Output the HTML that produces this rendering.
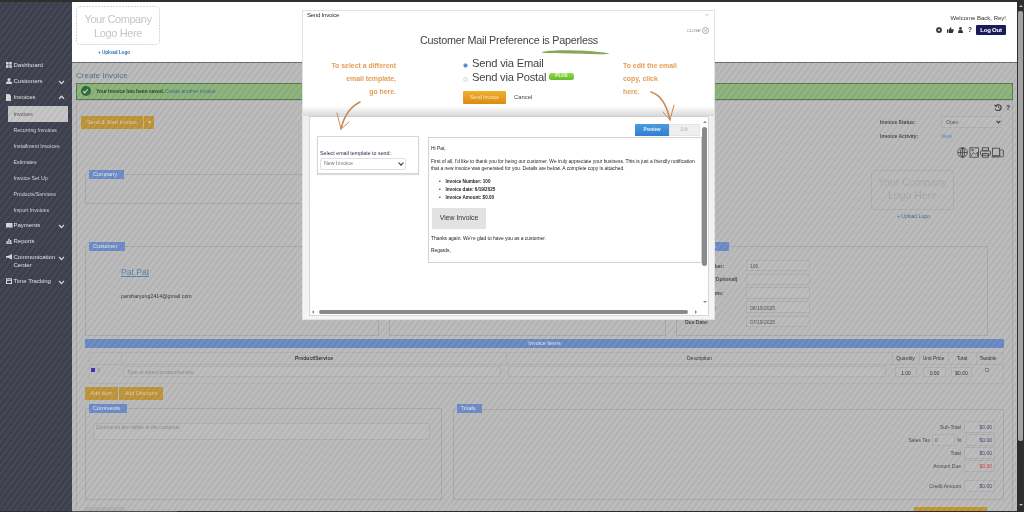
<!DOCTYPE html>
<html><head><meta charset="utf-8">
<style>
*{margin:0;padding:0;box-sizing:border-box}
html,body{width:1024px;height:512px;overflow:hidden;background:#c2c2c2;font-family:"Liberation Sans",sans-serif;-webkit-font-smoothing:antialiased}
.a{position:absolute}
.t{position:absolute;white-space:nowrap;line-height:1}
.stripes{background-image:repeating-linear-gradient(127deg,rgba(0,0,0,0.05) 0,rgba(255,255,255,0.05) 2.4px,rgba(0,0,0,0.05) 4.8px)}
#side{left:0;top:0;width:72px;height:512px;background-color:#3d3f4e}
#side .m{color:#e4e4e4;font-size:6px}
#side .s{color:#d8d8d8;font-size:5.25px}
#hdr{left:72px;top:2px;width:945px;height:60px;background:#fff}
#content{left:72px;top:62px;width:945px;height:450px;background-color:#bbbbbb;border-top:1px solid #6a6a6a}
.fs{position:absolute;border:1px solid #a9a9a9}
.lg{position:absolute;background:#6c8bc8;color:#e4e9f4;font-size:5.6px;line-height:9px;padding-left:4px}
.inp{position:absolute;border:1px solid #b0b0b0;background:rgba(255,255,255,0.04);font-size:5px;color:#555;line-height:1}
.btn-o{position:absolute;background:#bf9538;color:#dccfae;font-size:5.5px;text-align:center}
.lbl{position:absolute;font-size:5px;color:#4a4a4a;white-space:nowrap;line-height:1}
#modal{left:301.5px;top:9.5px;width:413px;height:310px;background:#fff;border:1px solid #e2e2e2}
.hand{position:absolute;color:#e69c55;font-family:"Liberation Sans",sans-serif;font-weight:bold;font-size:6.9px;white-space:nowrap;line-height:1}
.em{position:absolute;font-size:4.9px;color:#222;white-space:nowrap;line-height:1}
</style></head><body><div id="root" style="position:absolute;left:0;top:0;width:1024px;height:512px;will-change:transform">

<!-- top strip -->


<!-- sidebar -->
<div id="side" class="a">
  <svg class="a" style="left:6px;top:62px" width="6" height="6" viewBox="0 0 6 6" fill="#d8d8d8"><rect x="0" y="0" width="2.6" height="2.6"/><rect x="3.2" y="0" width="2.6" height="2.6"/><rect x="0" y="3.2" width="2.6" height="2.6"/><rect x="3.2" y="3.2" width="2.6" height="2.6"/></svg>
  <div class="t m" style="left:13.5px;top:62px">Dashboard</div>
  <svg class="a" style="left:6px;top:78px" width="6" height="6" viewBox="0 0 6 6" fill="#d8d8d8"><circle cx="3" cy="1.5" r="1.5"/><path d="M0 6 C0 3.5 1 3.2 3 3.2 C5 3.2 6 3.5 6 6 Z"/></svg>
  <div class="t m" style="left:13.5px;top:78px">Customers</div>
  <svg class="a" style="left:58px;top:79.5px" width="7" height="5" viewBox="0 0 7 5"><polyline points="1,1 3.5,3.6 6,1" stroke="#dadada" stroke-width="1.3" fill="none"/></svg>
  <svg class="a" style="left:6px;top:94px" width="5" height="7" viewBox="0 0 5 7" fill="#d8d8d8"><path d="M0 0 H3.2 L5 1.8 V7 H0 Z"/></svg>
  <div class="t m" style="left:13.5px;top:94px">Invoices</div>
  <svg class="a" style="left:58px;top:95px" width="7" height="5" viewBox="0 0 7 5"><polyline points="1,3.8 3.5,1.2 6,3.8" stroke="#dadada" stroke-width="1.3" fill="none"/></svg>
  <div class="a" style="left:8px;top:106px;width:60px;height:15.8px;background:#c6c6c6"></div>
  <div class="t s" style="left:13.5px;top:111.6px;color:#555">Invoices</div>
  <div class="t s" style="left:13.5px;top:127.6px">Recurring Invoices</div>
  <div class="t s" style="left:13.5px;top:143.6px">Installment Invoices</div>
  <div class="t s" style="left:13.5px;top:159.6px">Estimates</div>
  <div class="t s" style="left:13.5px;top:175.6px">Invoice Set Up</div>
  <div class="t s" style="left:13.5px;top:191.6px">Products/Services</div>
  <div class="t s" style="left:13.5px;top:207.6px">Import Invoices</div>
  <svg class="a" style="left:6px;top:223px" width="7" height="5" viewBox="0 0 7 5" fill="#d8d8d8"><rect x="0" y="0" width="6.5" height="4.5"/></svg>
  <div class="t m" style="left:13.5px;top:222px">Payments</div>
  <svg class="a" style="left:58px;top:223.5px" width="7" height="5" viewBox="0 0 7 5"><polyline points="1,1 3.5,3.6 6,1" stroke="#dadada" stroke-width="1.3" fill="none"/></svg>
  <svg class="a" style="left:6px;top:238px" width="6" height="6" viewBox="0 0 6 6" fill="#d8d8d8"><rect x="0.5" y="3" width="1.3" height="2.5"/><rect x="2.3" y="0.8" width="1.3" height="4.7"/><rect x="4.1" y="2" width="1.3" height="3.5"/><rect x="0" y="5.3" width="6" height="0.7"/></svg>
  <div class="t m" style="left:13.5px;top:238px">Reports</div>
  <svg class="a" style="left:6px;top:254px" width="7" height="6" viewBox="0 0 7 6" fill="#d8d8d8"><path d="M0 2 H2 L6 0 V5.5 L2 3.8 H0 Z"/></svg>
  <div class="t m" style="left:13.5px;top:254px">Communication</div>
  <div class="t m" style="left:13.5px;top:262px">Center</div>
  <svg class="a" style="left:58px;top:255.5px" width="7" height="5" viewBox="0 0 7 5"><polyline points="1,1 3.5,3.6 6,1" stroke="#dadada" stroke-width="1.3" fill="none"/></svg>
  <svg class="a" style="left:6px;top:278px" width="6" height="6" viewBox="0 0 6 6" fill="none" stroke="#d8d8d8" stroke-width="1"><rect x="0.5" y="0.8" width="5" height="4.7"/><line x1="0.5" y1="2.3" x2="5.5" y2="2.3"/></svg>
  <div class="t m" style="left:13.5px;top:278px">Time Tracking</div>
  <svg class="a" style="left:58px;top:279.5px" width="7" height="5" viewBox="0 0 7 5"><polyline points="1,1 3.5,3.6 6,1" stroke="#dadada" stroke-width="1.3" fill="none"/></svg>
</div>

<!-- content -->
<div id="content" class="a">
</div>
<div id="cc">
  <div class="t" style="left:76px;top:71.5px;font-size:8px;color:#5b6b8b">Create Invoice</div>
  <div class="a" style="left:76px;top:83px;width:937px;height:17px;background:#8cb37a;border:1px solid #4f7d4c"></div>
  <div class="a" style="left:81px;top:86px;width:10px;height:10px;border-radius:50%;background:#2c6b3b"></div>
  <div class="a" style="left:83.5px;top:88px;width:3px;height:5px;border-right:1.3px solid #d8e8d8;border-bottom:1.3px solid #d8e8d8;transform:rotate(40deg)"></div>
  <div class="t" style="left:96px;top:89px;font-size:5.2px;color:#234a23;font-weight:bold;letter-spacing:-0.15px">Your Invoice has been saved.</div>
  <div class="t" style="left:165px;top:89px;font-size:5px;color:#3f6b9c">Create another Invoice</div>
  <!-- outer panel -->
  <div class="fs" style="left:76px;top:100px;width:937px;height:410px;border-color:#adadad;border-bottom:none"></div>
  <!-- send & start button -->
  <div class="btn-o" style="left:81px;top:116px;width:62px;height:13px;line-height:13px">Send &amp; Start Invoice</div>
  <div class="btn-o" style="left:143px;top:116px;width:11px;height:13px;line-height:13px;border-left:1px solid #d7b26a">&#9662;</div>
  <!-- right top -->
  <svg class="a" style="left:994px;top:104px" width="8" height="7" viewBox="0 0 8 7" fill="none" stroke="#333" stroke-width="1.1"><path d="M1.6 2.2 A3 3 0 1 1 1.3 4.6"/><path d="M0.6 0.6 L1.6 2.4 L3.4 1.7" stroke-width="1"/><path d="M4.5 2 V3.7 L5.6 4.4" stroke-width="0.8"/></svg>
  <div class="t" style="left:1006px;top:104px;font-size:7px;color:#333;font-weight:bold">?</div>
  <div class="lbl" style="left:880px;top:119.5px;font-weight:bold;color:#474747">Invoice Status:</div>
  <div class="inp" style="left:941px;top:116px;width:61px;height:12px;padding:3px 0 0 4px">Open</div>
  <svg class="a" style="left:995.5px;top:120px" width="5" height="4" viewBox="0 0 5 4"><polyline points="0.6,0.8 2.5,2.9 4.4,0.8" stroke="#333" stroke-width="1.1" fill="none"/></svg>
  <div class="lbl" style="left:880px;top:134px;font-weight:bold;color:#474747">Invoice Activity:</div>
  <div class="t" style="left:941px;top:134px;font-size:5px;color:#5a86b8">View</div>
  <svg class="a" style="left:957px;top:147px" width="48" height="11" viewBox="0 0 48 11" fill="none" stroke="#4a4a4a" stroke-width="0.9">
    <circle cx="5.5" cy="5.5" r="4.8"/><ellipse cx="5.5" cy="5.5" rx="2" ry="4.8"/><line x1="0.7" y1="5.5" x2="10.3" y2="5.5"/><line x1="5.5" y1="0.7" x2="5.5" y2="10.3"/>
    <rect x="13" y="0.8" width="8.5" height="9.4"/><path d="M14 9 L16.5 5.5 L18.5 7.5 L20.5 5 V9.5" stroke-width="0.8"/><circle cx="15.5" cy="3" r="0.8"/>
    <rect x="25.5" y="0.8" width="6" height="3"/><rect x="23.5" y="3.8" width="10" height="4.5" rx="1"/><rect x="25.5" y="6.5" width="6" height="3.7"/>
    <rect x="35.5" y="1.2" width="7" height="7.5"/><rect x="42.8" y="3" width="3.6" height="6.8" rx="0.5"/><line x1="34.5" y1="9.8" x2="42.5" y2="9.8" stroke-width="1.2"/>
  </svg>
  <!-- logo box right -->
  <div class="a" style="left:871px;top:170px;width:83px;height:40px;border:1px solid #aeaeae;border-radius:3px"></div>
  <div class="t" style="left:871px;width:83px;text-align:center;top:177px;font-size:10.5px;color:#a9a9a9">Your Company</div>
  <div class="t" style="left:871px;width:83px;text-align:center;top:190px;font-size:10.5px;color:#a9a9a9">Logo Here</div>
  <div class="t" style="left:897px;top:214px;font-size:5px;color:#3f6a9c">+ Upload Logo</div>
  <!-- company fieldset -->
  <div class="fs" style="left:85px;top:174px;width:560px;height:30px"></div>
  <div class="lg" style="left:89px;top:170px;width:35px">Company</div>
  <!-- customer fieldset -->
  <div class="fs" style="left:85px;top:246px;width:294px;height:90px"></div>
  <div class="lg" style="left:89px;top:242px;width:36px">Customer</div>
  <div class="t" style="left:121px;top:267.5px;font-size:8.6px;color:#5a80b0;text-decoration:underline">Pat Pat</div>
  <div class="t" style="left:121px;top:294px;font-size:5.3px;color:#333">pambaryung2414@gmail.com</div>
  <!-- middle panel -->
  <div class="fs" style="left:389px;top:246px;width:277px;height:90px"></div>
  <!-- details fieldset -->
  <div class="fs" style="left:676px;top:246px;width:312px;height:90px"></div>
  <div class="lg" style="left:694px;top:242px;width:35px;padding-left:5px">Details</div>
  <div class="lbl" style="left:685px;top:263.5px;font-weight:bold;color:#474747">Invoice Number:</div>
  <div class="inp" style="left:746px;top:260px;width:64px;height:11px;padding:3px 0 0 3px">100</div>
  <div class="lbl" style="left:685px;top:277px;font-weight:bold;color:#474747">PO Number (Optional)</div>
  <div class="inp" style="left:746px;top:274px;width:64px;height:11px"></div>
  <div class="lbl" style="left:685px;top:291px;font-weight:bold;color:#474747">Payment Terms:</div>
  <div class="inp" style="left:746px;top:287px;width:64px;height:12px"></div>
  <div class="lbl" style="left:685px;top:305px;font-weight:bold;color:#474747">Invoice Date:</div>
  <div class="inp" style="left:746px;top:301px;width:64px;height:12px;padding:3.5px 0 0 3px">06/19/2025</div>
  <div class="lbl" style="left:685px;top:319.5px;font-weight:bold;color:#474747">Due Date:</div>
  <div class="inp" style="left:746px;top:316px;width:64px;height:11px;padding:3px 0 0 3px">07/19/2025</div>
  <!-- invoice items -->
  <div class="a" style="left:85px;top:339px;width:919px;height:9px;background:#6a89c4"></div>
  <div class="t" style="left:85px;width:919px;text-align:center;top:341px;font-size:5.5px;color:#dfe6f3">Invoice Items</div>
  <div class="fs" style="left:89px;top:352px;width:915px;height:32px;border-color:#b2b2b2"></div>
  <div class="a" style="left:89px;top:352px;width:915px;height:13px;border-bottom:1px solid #b0b0b0"></div>
  <div class="a" style="left:121px;top:352px;width:1px;height:13px;background:#b0b0b0"></div>
  <div class="a" style="left:506px;top:352px;width:1px;height:13px;background:#b0b0b0"></div>
  <div class="a" style="left:892px;top:352px;width:1px;height:13px;background:#b0b0b0"></div>
  <div class="a" style="left:919px;top:352px;width:1px;height:13px;background:#b0b0b0"></div>
  <div class="a" style="left:948px;top:352px;width:1px;height:13px;background:#b0b0b0"></div>
  <div class="a" style="left:976px;top:352px;width:1px;height:13px;background:#b0b0b0"></div>
  <div class="lbl" style="left:122px;width:384px;text-align:center;top:356px;font-weight:bold;color:#333">Product/Service</div>
  <div class="lbl" style="left:507px;width:385px;text-align:center;top:356px;color:#333">Description</div>
  <div class="lbl" style="left:892px;width:27px;text-align:center;top:356px;color:#333">Quantity</div>
  <div class="lbl" style="left:919px;width:29px;text-align:center;top:356px;color:#333">Unit Price</div>
  <div class="lbl" style="left:948px;width:28px;text-align:center;top:356px;color:#333">Total</div>
  <div class="lbl" style="left:976px;width:24px;text-align:center;top:356px;color:#333">Taxable</div>
  <div class="a" style="left:91px;top:368px;width:4px;height:4px;background:#3535b8"></div>
  <div class="lbl" style="left:97px;top:368px;color:#8a8a8a">X</div>
  <div class="inp" style="left:123px;top:366px;width:378px;height:11px;padding:3px 0 0 3px;color:#8a8a8a">Type or select product/service</div>
  <div class="inp" style="left:508px;top:366px;width:378px;height:11px"></div>
  <div class="inp" style="left:895px;top:367px;width:22px;height:10px;text-align:center;padding-top:3px;color:#333">1.00</div>
  <div class="inp" style="left:923px;top:367px;width:23px;height:10px;text-align:center;padding-top:3px;color:#333">0.00</div>
  <div class="inp" style="left:951px;top:367px;width:21px;height:10px;text-align:center;padding-top:3px;color:#333">$0.00</div>
  <div class="a" style="left:985px;top:368px;width:4px;height:4px;border:1px solid #888"></div>
  <div class="btn-o" style="left:85px;top:387px;width:33px;height:13px;line-height:13px">Add Item</div>
  <div class="btn-o" style="left:119px;top:387px;width:44px;height:13px;line-height:13px">Add Discount</div>
  <!-- comments -->
  <div class="fs" style="left:85px;top:408px;width:357px;height:92px"></div>
  <div class="lg" style="left:89px;top:404px;width:38px">Comments</div>
  <div class="inp" style="left:93px;top:423px;width:337px;height:17px;padding:1px 0 0 2px;color:#8a8a8a;border-radius:2px">Comments are visible to the customer</div>
  <!-- totals -->
  <div class="fs" style="left:453px;top:409px;width:551px;height:91px"></div>
  <div class="lg" style="left:457px;top:404px;width:25px">Totals</div>
  <div class="lbl" style="left:900px;width:61px;text-align:right;top:425px">Sub-Total</div>
  <div class="inp" style="left:964px;top:421px;width:31px;height:12px;text-align:right;padding:3px 2px 0 0;color:#44446a">$0.00</div>
  <div class="lbl" style="left:870px;width:60px;text-align:right;top:438px">Sales Tax</div>
  <div class="inp" style="left:932px;top:434px;width:23px;height:12px;padding:3px 0 0 2px">0</div>
  <div class="lbl" style="left:957px;top:438px">%</div>
  <div class="inp" style="left:966px;top:434px;width:29px;height:12px;text-align:right;padding:3px 2px 0 0;color:#44446a">$0.00</div>
  <div class="lbl" style="left:900px;width:61px;text-align:right;top:451px">Total</div>
  <div class="inp" style="left:964px;top:447px;width:31px;height:12px;text-align:right;padding:3px 2px 0 0;color:#44446a">$0.00</div>
  <div class="lbl" style="left:900px;width:61px;text-align:right;top:464px">Amount Due</div>
  <div class="inp" style="left:964px;top:460px;width:31px;height:12px;text-align:right;padding:3px 2px 0 0;color:#d04040">$0.00</div>
  <div class="lbl" style="left:900px;width:61px;text-align:right;top:484px">Credit Amount</div>
  <div class="inp" style="left:964px;top:480px;width:31px;height:12px;text-align:right;padding:3px 2px 0 0;color:#44446a">$0.00</div>
  <!-- bottom buttons -->
  <div class="a" style="left:85px;top:507px;width:40px;height:4px;background:#b0b0b0"></div>
  <div class="a" style="left:914px;top:507px;width:73px;height:4px;background:#c9962f"></div>
</div>

<div class="a stripes" style="left:0;top:0;width:1017px;height:512px;pointer-events:none"></div>
<!-- header -->
<div id="hdr" class="a">
  <svg class="a" style="left:4px;top:4px" width="84" height="39" viewBox="0 0 84 39"><rect x="0.5" y="0.5" width="83" height="38" rx="3.5" fill="none" stroke="#d6d6d6" stroke-width="1" stroke-dasharray="2 1"/></svg>
  <div class="t" style="left:4px;width:84px;text-align:center;top:12px;font-size:11px;color:#c6c6c6;letter-spacing:-0.45px">Your Company</div>
  <div class="t" style="left:4px;width:84px;text-align:center;top:26px;font-size:11px;color:#c6c6c6;letter-spacing:-0.4px">Logo Here</div>
  <div class="t" style="left:26px;top:48.5px;font-size:4.6px;color:#2f6db5;font-weight:bold">+ Upload Logo</div>
  <div class="t" style="right:11px;top:13px;font-size:6px;color:#333">Welcome Back, Rey!</div>
  <div class="a" style="left:904px;top:23px;width:30px;height:10px;background:#1b1b5b;border-radius:1px"></div>
  <div class="t" style="left:904px;width:30px;text-align:center;top:25px;font-size:6px;color:#fff;font-weight:bold;letter-spacing:-0.2px">Log Out</div>
  <svg class="a" style="left:864px;top:25px" width="6" height="6" viewBox="0 0 6 6"><circle cx="3" cy="3" r="2.1" fill="none" stroke="#333" stroke-width="1.5"/><g stroke="#333" stroke-width="0.9"><line x1="3" y1="0" x2="3" y2="6"/><line x1="0" y1="3" x2="6" y2="3"/><line x1="0.9" y1="0.9" x2="5.1" y2="5.1"/><line x1="5.1" y1="0.9" x2="0.9" y2="5.1"/></g><circle cx="3" cy="3" r="0.9" fill="#fff"/></svg>
  <svg class="a" style="left:874.5px;top:25px" width="7" height="6" viewBox="0 0 7 6" fill="#333"><rect x="0" y="2.4" width="1.5" height="3.4"/><path d="M2 2.5 L3.6 0.2 C4.3 0 4.5 0.6 4.3 1.3 L4 2.2 H6.3 C6.9 2.3 7 2.8 6.7 3.3 L6 5.6 C5.8 5.9 5.6 6 5.2 6 H2 Z"/></svg>
  <svg class="a" style="left:885.5px;top:25px" width="5" height="6" viewBox="0 0 5 6" fill="#333"><circle cx="2.5" cy="1.4" r="1.4"/><path d="M0 6 L0.4 3.8 C0.6 3.2 1.2 3 2.5 3 C3.8 3 4.4 3.2 4.6 3.8 L5 6 Z"/></svg>
  <div class="t" style="left:896px;top:25px;font-size:6.5px;color:#333;font-weight:bold">?</div>
</div>

<!-- modal -->
<div id="modal" class="a">
</div>
<div id="mc">
  <div class="t" style="left:307px;top:11.8px;font-size:6.2px;color:#333;letter-spacing:-0.3px">Send Invoice</div>
  <div class="a" style="left:704.5px;top:14px;width:0;height:0;border-left:2px solid transparent;border-right:2px solid transparent;border-top:3px solid #dedede"></div>
  <div class="t" style="left:687px;top:28.5px;font-size:4px;color:#777">CLOSE</div>
  <svg class="a" style="left:702px;top:27px" width="7" height="7" viewBox="0 0 7 7" fill="none" stroke="#888" stroke-width="0.7"><circle cx="3.5" cy="3.5" r="3"/><path d="M2.4 2.4 L4.6 4.6 M4.6 2.4 L2.4 4.6"/></svg>
  
  <div class="t" style="left:420px;top:34.5px;font-size:10.8px;color:#444;letter-spacing:-0.25px">Customer Mail Preference is Paperless</div>
  <svg class="a" style="left:540px;top:48px" width="72" height="8" viewBox="0 0 72 8"><path d="M2.3 3.8 C 10 2, 30 1.8, 45 2.8 C 55 3.5, 63 4.4, 69.5 5.4 C 63 6.8, 52 6.3, 42 5.8 C 28 5.3, 14 5.6, 2.3 4.8 Z" fill="#88a858"/></svg>
  <div class="a" style="left:463px;top:63px;width:5px;height:5px;border-radius:50%;background:#2f7fe0;border:1px solid #bcd"></div>
  <div class="t" style="left:472px;top:58px;font-size:11.2px;color:#444;letter-spacing:-0.22px">Send via Email</div>
  <div class="a" style="left:463px;top:77px;width:5px;height:5px;border-radius:50%;background:#f4f4f4;border:1px solid #ddd"></div>
  <div class="t" style="left:472px;top:72px;font-size:11.2px;color:#444;letter-spacing:-0.24px">Send via Postal</div>
  <div class="a" style="left:549.3px;top:72.8px;width:24.5px;height:7.6px;border-radius:2.5px;background:linear-gradient(#92dc4a,#66bb2a)"></div>
  <div class="t" style="left:549px;width:25px;text-align:center;top:74.3px;font-size:4.6px;color:#eef9e4;font-weight:bold">PLUS</div>
  <div class="a" style="left:463px;top:91px;width:43px;height:13px;border-radius:1px;background:linear-gradient(#f0b030,#dc8a10)"></div>
  <div class="t" style="left:463px;width:43px;text-align:center;top:95px;font-size:5px;color:#fbe8c8">Send Invoice</div>
  <div class="t" style="left:514px;top:95px;font-size:5.9px;color:#444">Cancel</div>
  <!-- annotations -->
  <div class="hand" style="right:628px;top:62.5px">To select a different</div>
  <div class="hand" style="right:628px;top:75.5px">email template,</div>
  <div class="hand" style="right:628px;top:88.5px">go here.</div>
  <div class="hand" style="left:623px;top:62.5px">To edit the email</div>
  <div class="hand" style="left:623px;top:75.5px">copy, click</div>
  <div class="hand" style="left:623px;top:88.5px">here.</div>
  <!-- inner frame -->
  <div class="a" style="left:302.5px;top:106px;width:411px;height:213px;background:linear-gradient(#fff 0,#d9d9d9 10px,#efefef 10px,#f4f4f4 100%)"></div>
  <div class="a" style="left:309px;top:116px;width:400px;height:200px;background:#fff;border:1px solid #d6d6d6;border-top-color:#cfcfcf"></div>
  <!-- arrows -->
  <svg class="a" style="left:330px;top:98px" width="35" height="36" viewBox="0 0 35 36"><path d="M30 4 C 20 9, 14 18, 11 31" stroke="#c98a58" stroke-width="1.6" fill="none" stroke-linecap="round"/><path d="M7 15 L 11 31 L 19 24" stroke="#c98a58" stroke-width="1" fill="none" stroke-linecap="round"/></svg>
  <svg class="a" style="left:645px;top:88px" width="35" height="36" viewBox="0 0 35 36"><path d="M6 4 C 16 7, 22 18, 25 32" stroke="#c98a58" stroke-width="1.6" fill="none" stroke-linecap="round"/><path d="M18 24 L 25 32 L 29 17" stroke="#c98a58" stroke-width="1" fill="none" stroke-linecap="round"/></svg>
  <!-- template box -->
  <div class="a" style="left:317px;top:136px;width:102px;height:38px;border:1px solid #d6d6d6;box-shadow:0 1px 1px #ddd"></div>
  <div class="t" style="left:320px;top:151px;font-size:5.3px;color:#2a2a4a">Select email template to send:</div>
  <div class="a" style="left:320px;top:158px;width:86px;height:12px;border:1px solid #e0e0e0;border-radius:2px"></div>
  <div class="t" style="left:324px;top:161px;font-size:5.3px;color:#777">New Invoice</div>
  <div class="a" style="left:399px;top:161px;width:4px;height:4px;border-right:1.2px solid #333;border-bottom:1.2px solid #333;transform:rotate(45deg)"></div>
  <!-- preview/edit -->
  <div class="a" style="left:635px;top:124px;width:34px;height:12px;background:linear-gradient(#4b9be0,#2f7fcf)"></div>
  <div class="t" style="left:635px;width:34px;text-align:center;top:127.5px;font-size:4.5px;color:#e8f2fb;font-weight:bold">Preview</div>
  <div class="a" style="left:669px;top:124px;width:31px;height:12px;background:#efefef;border:1px solid #e4e4e4"></div>
  <div class="t" style="left:669px;width:31px;text-align:center;top:127.5px;font-size:4.5px;color:#bbb">Edit</div>
  <!-- email box -->
  <div class="a" style="left:428px;top:137px;width:274px;height:126px;border:1px solid #d2d2d2"></div>
  <div class="em" style="left:431px;top:147px">Hi Pat,</div>
  <div class="em" style="left:431px;top:159.7px">First of all, I'd like to thank you for being our customer. We truly appreciate your business. This is just a friendly notification</div>
  <div class="em" style="left:431px;top:166.5px">that a new invoice was generated for you. Details are below. A complete copy is attached.</div>
  <div class="em" style="left:439px;top:179.5px">&#8226;</div>
  <div class="em" style="left:445.5px;top:179.9px;font-weight:bold;font-size:4.6px">Invoice Number: 100</div>
  <div class="em" style="left:439px;top:187.5px">&#8226;</div>
  <div class="em" style="left:445.5px;top:187.9px;font-weight:bold;font-size:4.6px">Invoice date: 6/19/2025</div>
  <div class="em" style="left:439px;top:195.5px">&#8226;</div>
  <div class="em" style="left:445.5px;top:195.9px;font-weight:bold;font-size:4.6px">Invoice Amount: $0.00</div>
  <div class="a" style="left:432px;top:208px;width:54px;height:21px;background:#e2e2e2"></div>
  <div class="t" style="left:432px;width:54px;text-align:center;top:214.5px;font-size:6.9px;color:#333">View Invoice</div>
  <div class="em" style="left:431px;top:236.5px">Thanks again. We're glad to have you as a customer.</div>
  <div class="em" style="left:431px;top:249px">Regards,</div>
  <!-- scrollbars -->
  <div class="a" style="left:702px;top:127px;width:5px;height:139px;border-radius:2.5px;background:#8a8a8a"></div>
  <div class="a" style="left:702.5px;top:121px;width:0;height:0;border-left:2px solid transparent;border-right:2px solid transparent;border-bottom:2.5px solid #888"></div>
  <div class="a" style="left:702.5px;top:301px;width:0;height:0;border-left:2px solid transparent;border-right:2px solid transparent;border-top:2.5px solid #888"></div>
  <div class="a" style="left:319px;top:310px;width:369px;height:4px;border-radius:2px;background:#8a8a8a"></div>
  <div class="a" style="left:312px;top:310px;width:0;height:0;border-top:2px solid transparent;border-bottom:2px solid transparent;border-right:2.5px solid #888"></div>
  <div class="a" style="left:695px;top:310px;width:0;height:0;border-top:2px solid transparent;border-bottom:2px solid transparent;border-left:2.5px solid #888"></div>
</div>

<!-- scrollbar -->
<div class="a" style="left:1017px;top:0;width:7px;height:512px;background:#2e2e2e"></div>
<div class="a" style="left:1018px;top:11px;width:5px;height:430px;background:#a3a3a3;border-radius:2px"></div>

<div class="a" style="left:1018.5px;top:4.5px;width:0;height:0;border-left:2px solid transparent;border-right:2px solid transparent;border-bottom:2.5px solid #bbb"></div>
<div class="a" style="left:1018.5px;top:504px;width:0;height:0;border-left:2px solid transparent;border-right:2px solid transparent;border-top:2.5px solid #bbb"></div>
<div class="a" style="left:0;top:0;width:1017px;height:2px;background:#2f302e"></div>
<!-- bottom strip -->
<div class="a" style="left:0;top:510.5px;width:1024px;height:1.5px;background:#22303a"></div><div class="a" style="left:72px;top:510.5px;width:105px;height:1.5px;background:#43535d"></div>
</div></body></html>
